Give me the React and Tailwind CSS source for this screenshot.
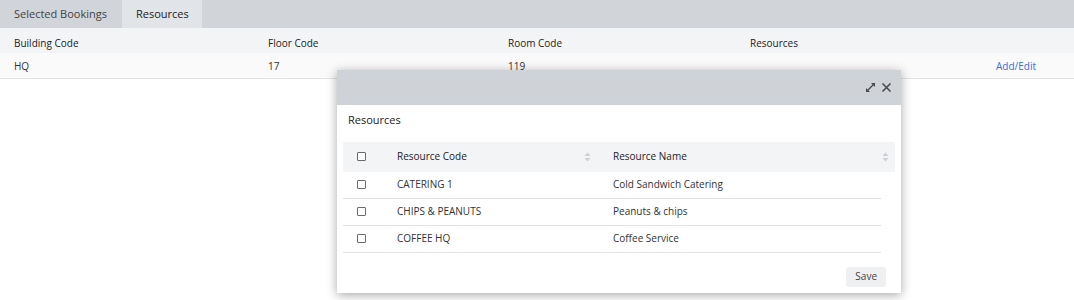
import React from 'react';

const font = { fontFamily: '"Open Sans", "Liberation Sans", sans-serif' };

const SortIcon = () => (
  <svg width="7" height="10" viewBox="0 0 7 10" className="text-[#cdd1d5]">
    <path d="M3.5 0.5 L6.5 4 H0.5 Z" fill="currentColor" />
    <path d="M3.5 9.5 L6.5 6 H0.5 Z" fill="currentColor" />
  </svg>
);

const Box = () => (
  <span className="inline-block w-[9px] h-[9px] border border-[#6b6b6b] rounded-[1px] bg-white" />
);

const rows = [
  { code: 'CATERING 1', name: 'Cold Sandwich Catering' },
  { code: 'CHIPS & PEANUTS', name: 'Peanuts & chips' },
  { code: 'COFFEE HQ', name: 'Coffee Service' },
];

export default function App() {
  return (
    <div className="relative w-[1074px] h-[300px] bg-white text-[10px] text-[#333]" style={font}>
      {/* Tabs */}
      <div className="flex h-[28px] bg-[#d1d5d9] text-[11px]">
        <div className="w-[122px] pl-[14px] flex items-center text-[#444]">Selected Bookings</div>
        <div className="w-[80px] pl-[14px] flex items-center bg-[#e2e5e8] text-[#222]">Resources</div>
      </div>

      {/* Header row */}
      <div className="flex h-[25px] items-center pt-[6px] bg-[#f3f4f6] text-[#222]">
        <div className="w-[268px] pl-[14px]">Building Code</div>
        <div className="w-[240px]">Floor Code</div>
        <div className="w-[242px]">Room Code</div>
        <div className="flex-1">Resources</div>
      </div>
      <div className="flex h-[26px] items-center pt-[2px] bg-[#fafafa] border-b border-[#e3e3e3]">
        <div className="w-[268px] pl-[14px]">HQ</div>
        <div className="w-[240px]">17</div>
        <div className="w-[242px]">119</div>
        <div className="w-[246px]"></div>
        <div className="text-[#3d6ce0]">Add/Edit</div>
      </div>

      {/* Modal */}
      <div className="absolute left-[337px] top-[70px] w-[564px] bg-white shadow-[0_2px_10px_rgba(0,0,0,0.35)]">
        <div className="h-[35px] bg-[#cfd3d7] flex items-center justify-end pr-[9px] gap-[5px]">
          <svg width="11" height="11" viewBox="0 0 11 11" className="text-[#4a4a4a]">
            <path d="M1.5 9.5 L9.5 1.5" stroke="currentColor" strokeWidth="1.3" />
            <path d="M1 6 V10 H5 Z" fill="currentColor" />
            <path d="M6 1 H10 V5 Z" fill="currentColor" />
          </svg>
          <svg width="11" height="11" viewBox="0 0 11 11" className="text-[#4a4a4a]">
            <path d="M1.5 1.5 L9.5 9.5 M9.5 1.5 L1.5 9.5" stroke="currentColor" strokeWidth="1.6" />
          </svg>
        </div>
        <div className="px-[11px] pt-[7px] text-[11px] text-[#222]">Resources</div>
        <div className="mt-[13px] px-[6px]">
          <div className="flex h-[30px] items-center bg-[#f3f4f6] text-[#222]">
            <div className="w-[54px] pl-[14px] flex items-center"><Box /></div>
            <div className="w-[216px] flex items-center justify-between pr-[22px]">
              <span>Resource Code</span>
              <SortIcon />
            </div>
            <div className="flex-1 flex items-center justify-between pr-[6px]">
              <span>Resource Name</span>
              <SortIcon />
            </div>
          </div>
          <div className="w-[538px]">
            {rows.map((r) => (
              <div key={r.code} className="flex h-[27px] items-center border-b border-[#e3e3e3]">
                <div className="w-[54px] pl-[14px] flex items-center"><Box /></div>
                <div className="w-[216px]">{r.code}</div>
                <div className="flex-1">{r.name}</div>
              </div>
            ))}
          </div>
        </div>
        <div className="flex justify-end pr-[15px] pt-[14px] pb-[6px]">
          <button className="h-[20px] px-[9px] rounded-[3px] bg-[#eff0f2] text-[#444] text-[10px]">Save</button>
        </div>
      </div>
    </div>
  );
}
